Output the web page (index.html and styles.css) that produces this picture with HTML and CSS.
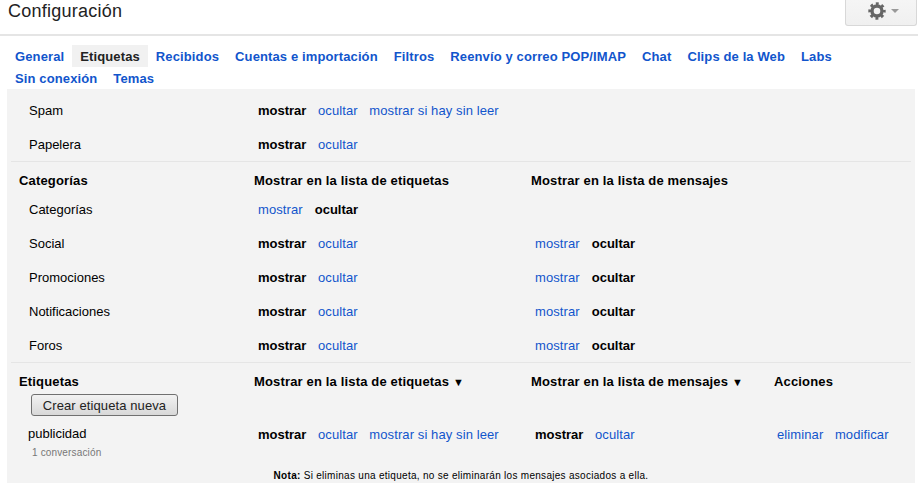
FILE: index.html
```html
<!DOCTYPE html>
<html lang="es">
<head>
<meta charset="utf-8">
<title>Configuración</title>
<link rel="stylesheet" href="styles.css">
</head>
<body>
<header class="top">
  <h1 class="title">Configuración</h1>
  <button class="gear-btn" type="button" aria-label="Configuración">
    <svg class="gear" width="18" height="18" viewBox="0 0 18 18" aria-hidden="true">
      <circle cx="9" cy="9" r="5" fill="none" stroke="#666" stroke-width="3.4"/>
      <circle cx="9" cy="9" r="7.2" fill="none" stroke="#666" stroke-width="3" stroke-dasharray="2.83 2.83" stroke-dashoffset="1.41"/>
    </svg>
    <span class="caret"></span>
  </button>
</header>
<nav class="tabs">
  <a class="tab">General</a><a class="tab tab-on">Etiquetas</a><a class="tab">Recibidos</a><a class="tab">Cuentas e importación</a><a class="tab">Filtros</a><a class="tab">Reenvío y correo POP/IMAP</a><a class="tab">Chat</a><a class="tab">Clips de la Web</a><a class="tab">Labs</a><a class="tab">Sin conexión</a><a class="tab">Temas</a>
</nav>
<main class="panel">
  <section class="group">
    <div class="row"><div class="name">Spam</div><div class="opts"><b>mostrar</b><a>ocultar</a><a>mostrar si hay sin leer</a></div></div>
    <div class="row"><div class="name">Papelera</div><div class="opts"><b>mostrar</b><a>ocultar</a></div></div>
  </section>
  <section class="group">
    <div class="row row-head"><div>Categorías</div><div>Mostrar en la lista de etiquetas</div><div>Mostrar en la lista de mensajes</div></div>
    <div class="row"><div class="name">Categorías</div><div class="opts"><a>mostrar</a><b>ocultar</b></div></div>
    <div class="row"><div class="name">Social</div><div class="opts"><b>mostrar</b><a>ocultar</a></div><div class="opts"><a>mostrar</a><b>ocultar</b></div></div>
    <div class="row"><div class="name">Promociones</div><div class="opts"><b>mostrar</b><a>ocultar</a></div><div class="opts"><a>mostrar</a><b>ocultar</b></div></div>
    <div class="row"><div class="name">Notificaciones</div><div class="opts"><b>mostrar</b><a>ocultar</a></div><div class="opts"><a>mostrar</a><b>ocultar</b></div></div>
    <div class="row"><div class="name">Foros</div><div class="opts"><b>mostrar</b><a>ocultar</a></div><div class="opts"><a>mostrar</a><b>ocultar</b></div></div>
  </section>
  <section class="group group-last">
    <div class="row row-head"><div>Etiquetas</div><div>Mostrar en la lista de etiquetas <span class="arrow">▼</span></div><div>Mostrar en la lista de mensajes <span class="arrow">▼</span></div><div>Acciones</div></div>
    <button class="create" type="button">Crear etiqueta nueva</button>
    <div class="row row-label">
      <div class="name-label">publicidad<small class="count">1 conversación</small></div>
      <div class="opts"><b>mostrar</b><a>ocultar</a><a>mostrar si hay sin leer</a></div>
      <div class="opts"><b>mostrar</b><a>ocultar</a></div>
      <div class="opts opts-actions"><a>eliminar</a><a>modificar</a></div>
    </div>
    <p class="note"><b>Nota:</b> Si eliminas una etiqueta, no se eliminarán los mensajes asociados a ella.</p>
  </section>
</main>
</body>
</html>
```
FILE: styles.css
```css
* { box-sizing: border-box; }
body {
  margin: 0;
  height: 483px;
  overflow: hidden;
  background: #fff;
  color: #000;
  font-family: "Liberation Sans", Arial, sans-serif;
  font-size: 13px;
}
.top {
  height: 36px;
  border-bottom: 2px solid #e5e5e5;
  display: flex;
  justify-content: space-between;
  align-items: flex-start;
  padding-left: 8px;
}
.title {
  margin: 0;
  font-size: 18px;
  font-weight: normal;
  line-height: 23px;
  letter-spacing: 0.25px;
  color: #222;
}
.gear-btn {
  width: 72px;
  height: 26px;
  margin-right: 1px;
  padding: 0 0 5px 22px;
  display: flex;
  align-items: flex-end;
  gap: 5px;
  background: linear-gradient(#f5f5f5, #f0f0f0);
  border: 1px solid #d8d8d8;
  border-top: 0;
  border-radius: 0 0 3px 3px;
}
.gear { display: block; }
.caret {
  width: 0;
  height: 0;
  margin-bottom: 7px;
  border: 4px solid transparent;
  border-top-color: #999;
  border-bottom: 0;
}
.tabs {
  display: flex;
  flex-wrap: wrap;
  padding: 9px 0 0 7px;
  width: 900px;
}
.tab {
  height: 22px;
  padding: 1px 8px 0;
  line-height: 22px;
  font-size: 13px;
  font-weight: bold;
  letter-spacing: 0.12px;
  color: #15c;
}
.tab-on { background: #f1f1f1; color: #222; }
.panel {
  background: #f3f3f3;
  margin: 0 3px 0 7px;
  height: 394px;
  padding: 4px 4px 0;
}
.group { border-bottom: 1px solid #e5e5e5; }
.group-last { border-bottom: 0; }
.row {
  display: grid;
  grid-template-columns: 235px 277px 243px 1fr;
  align-items: center;
  height: 34px;
  padding-left: 8px;
}
.row-head {
  height: 30px;
  padding-top: 6px;
  font-weight: bold;
  letter-spacing: 0.16px;
}
.arrow { font-size: 11px; letter-spacing: 0; }
.name { padding-left: 10px; }
.opts {
  display: flex;
  gap: 11.6px;
  padding-left: 4px;
}
.opts a { color: #15c; letter-spacing: 0.1px; }
.opts a + b { margin-left: 0.4px; }
.opts-actions { margin-left: -1px; }
.create {
  display: block;
  width: 147px;
  height: 22px;
  margin: 1px 0 0 20px;
  padding: 0;
  font: 13px "Liberation Sans", Arial, sans-serif;
  letter-spacing: 0.1px;
  color: #222;
  background: linear-gradient(#f2f2f2, #d8d8d8);
  border: 1px solid #707070;
  border-radius: 3px;
}
.row-label {
  height: 50px;
  padding-top: 10px;
  align-items: start;
}
.row-label .opts { padding-top: 1px; }
.name-label { padding-left: 9px; }
.count {
  display: block;
  margin: 6px 0 0 4px;
  font-size: 10px;
  letter-spacing: 0.15px;
  color: #777;
}
.note {
  margin: 4px 0 0;
  text-align: center;
  font-size: 10px;
  letter-spacing: 0.29px;
  line-height: 11px;
}
```
